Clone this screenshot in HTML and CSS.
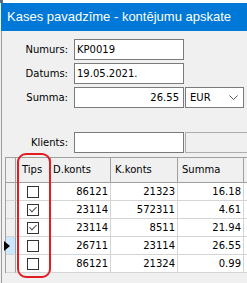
FILE: index.html
```html
<!DOCTYPE html>
<html lang="lv">
<head>
  <meta charset="UTF-8">
  <meta name="viewport" content="width=device-width, initial-scale=1.0">
  <title>Kases pavadzīme</title>
  <link rel="stylesheet" href="styles.css">
</head>
<body>
  <div class="window">
    <div class="top-strip"><span class="corner"></span></div>
    <div class="titlebar">Kases pavadzīme - kontējumu apskate</div>
    <div class="content">
      <!-- Galvene -->
      <div class="form">
        <div class="row">
          <label>Numurs:</label>
          <div class="field">KP0019</div>
        </div>
        <div class="row">
          <label>Datums:</label>
          <div class="field">19.05.2021.</div>
        </div>
        <div class="row">
          <label>Summa:</label>
          <div class="field num">26.55</div>
          <div class="select">EUR
            <svg width="9" height="5" viewBox="0 0 9 5"><polyline points="0.5,0.5 4.5,4.5 8.5,0.5" fill="none" stroke="#555" stroke-width="1"/></svg>
          </div>
        </div>
        <div class="row klients">
          <label>Klients:</label>
          <div class="field"></div>
          <div class="field disabled"></div>
        </div>
      </div>
      <!-- Kontējumi -->
      <div class="grid">
        <div class="hd ind"></div><div class="hd">Tips</div><div class="hd">D.konts</div><div class="hd">K.konts</div><div class="hd">Summa</div><div class="hd last"></div>

        <div class="ind"></div><div class="chk"><span class="box"></span></div><div class="num">86121</div><div class="num">21323</div><div class="num">16.18</div><div class="last"></div>
        <div class="ind"></div><div class="chk"><span class="box on"></span></div><div class="num">23114</div><div class="num">572311</div><div class="num">4.61</div><div class="last"></div>
        <div class="ind"></div><div class="chk"><span class="box on"></span></div><div class="num">23114</div><div class="num">8511</div><div class="num">21.94</div><div class="last"></div>
        <div class="ind sel"><span class="arrow"></span></div><div class="chk"><span class="box"></span></div><div class="num">26711</div><div class="num">23114</div><div class="num">26.55</div><div class="last"></div>
        <div class="ind"></div><div class="chk"><span class="box"></span></div><div class="num">86121</div><div class="num">21324</div><div class="num">0.99</div><div class="last"></div>
      </div>
    </div>
    <div class="mark"></div>
  </div>
</body>
</html>
```

FILE: styles.css
```css
* { box-sizing: border-box; }
html, body { margin:0; padding:0; }
body {
  width:247px; height:283px; overflow:hidden;
  background:#f0f0f0;
  font-family: "DejaVu Sans", Tahoma, sans-serif;
  font-size:10px; color:#000;
}
.window { position:relative; height:283px; }
/* Virsraksts */
.top-strip { height:3px; background:#fff; }
.corner { display:block; width:3px; height:3px; background:#5a6e84; }
.titlebar {
  height:28px; background:#0078d7; color:#fff; margin-left:1px;
  font-family:"Liberation Sans", Arial, sans-serif; font-size:13px;
  padding-left:6px; line-height:28px; white-space:nowrap;
}
.content { height:252px; margin-left:1px; border-left:1px solid #9c9c9c; }
/* Forma */
.form { padding-top:8px; display:flex; flex-direction:column; gap:3px; }
.row { display:flex; align-items:center; height:21px; }
.row.klients { margin-top:21px; }
.row label { width:72px; text-align:right; padding-right:6px; }
.field {
  width:110px; height:21px; background:#fff; border:1px solid #7a7a7a;
  padding:0 4px 0 2px; line-height:19px;
}
.field.num { text-align:right; }
.field.disabled { background:#f0f0f0; border-color:#adadad; flex:1; margin-left:1px; border-right:none; }
.select {
  width:59px; height:21px; margin-left:1px; background:#fff; border:1px solid #7a7a7a;
  padding:0 5px 0 4px; line-height:19px;
  display:flex; justify-content:space-between; align-items:center;
}
/* Tabula */
.grid {
  margin:4px 0 0 3px;
  display:grid; grid-template-columns:10px 35px 60px 67px 66px 1fr;
  grid-auto-rows:18px; grid-template-rows:25px;
  border-top:1px solid #a0a0a0; border-left:1px solid #a0a0a0;
}
.grid > div { border-right:1px solid #d4d4d4; border-bottom:1px solid #d4d4d4; background:#fff; }
.grid .hd {
  background:#f0f0f0; border-right-color:#a0a0a0; border-bottom-color:#a0a0a0;
  padding-left:6px; line-height:24px;
}
.grid .hd:nth-child(2) { padding-left:6px; }
.grid .hd:nth-child(3) { padding-left:2px; }
.grid .hd:nth-child(4) { padding-left:4px; }
.grid .hd:nth-child(5) { padding-left:4px; }
.grid .ind { background:#f0f0f0; border-right-color:#a0a0a0; padding:0; }
.grid .ind.sel { background:#cce8ff; display:flex; align-items:center; }
.arrow {
  width:0; height:0; border-top:5px solid transparent; border-bottom:5px solid transparent;
  border-left:6px solid #000; margin-left:-2px;
}
.grid .num { text-align:right; padding-right:2px; line-height:17px; }
.grid .last { border-right:none; }
.chk { display:flex; justify-content:center; align-items:center; }
.box { width:12px; height:12px; border:1px solid #333; background:#fff; position:relative; }
.box.on::after {
  content:""; position:absolute; left:3px; top:0px; width:3px; height:6px;
  border:solid #555; border-width:0 1px 1px 0; transform:rotate(45deg);
}
/* Sarkanais iezīmējums */
.mark {
  position:absolute; left:17px; top:153px; width:34px; height:125px;
  border:2px solid #e31b23; border-radius:9px;
}
```
